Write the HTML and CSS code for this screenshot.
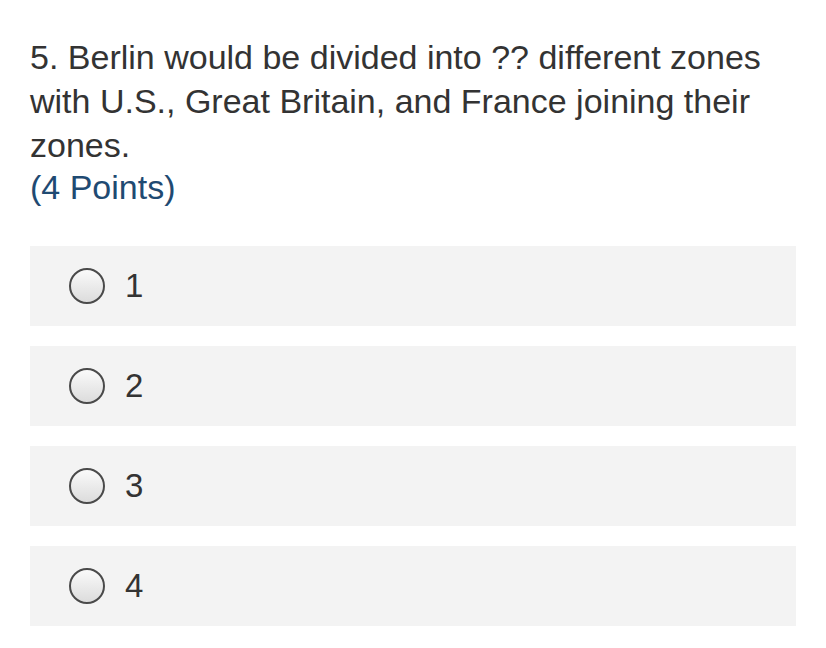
FILE: index.html
```html
<!DOCTYPE html>
<html>
<head>
<meta charset="utf-8">
<link rel="stylesheet" href="styles.css">
</head>
<body>
<div class="question">
  <div class="title">5. Berlin would be divided into ?? different zones with U.S., Great Britain, and France joining their zones.</div>
  <div class="points">(4 Points)</div>
</div>
<div class="options">
  <label class="option"><span class="radio"></span><span class="label">1</span></label>
  <label class="option"><span class="radio"></span><span class="label">2</span></label>
  <label class="option"><span class="radio"></span><span class="label">3</span></label>
  <label class="option"><span class="radio"></span><span class="label">4</span></label>
</div>
</body>
</html>
```
FILE: styles.css
```css
html, body {
  margin: 0;
  padding: 0;
  background: #ffffff;
}
body {
  font-family: "Liberation Sans", Arial, sans-serif;
  color: #333333;
  padding: 35px 30px 0 30px;
}
.question {
  font-size: 34px;
  line-height: 44px;
  width: 766px;
}
.points {
  color: #1f4a72;
  line-height: 40px;
}
.options {
  margin-top: 39px;
  display: flex;
  flex-direction: column;
  gap: 20px;
  width: 766px;
}
.option {
  display: flex;
  align-items: center;
  height: 80px;
  background: #f3f3f3;
  padding-left: 39px;
}
.radio {
  width: 32px;
  height: 32px;
  border: 2px solid #4a4a4a;
  border-radius: 50%;
  background: linear-gradient(#fafafa, #dcdcdc);
  flex: none;
}
.label {
  margin-left: 20px;
  font-size: 33px;
  color: #333333;
}
```
